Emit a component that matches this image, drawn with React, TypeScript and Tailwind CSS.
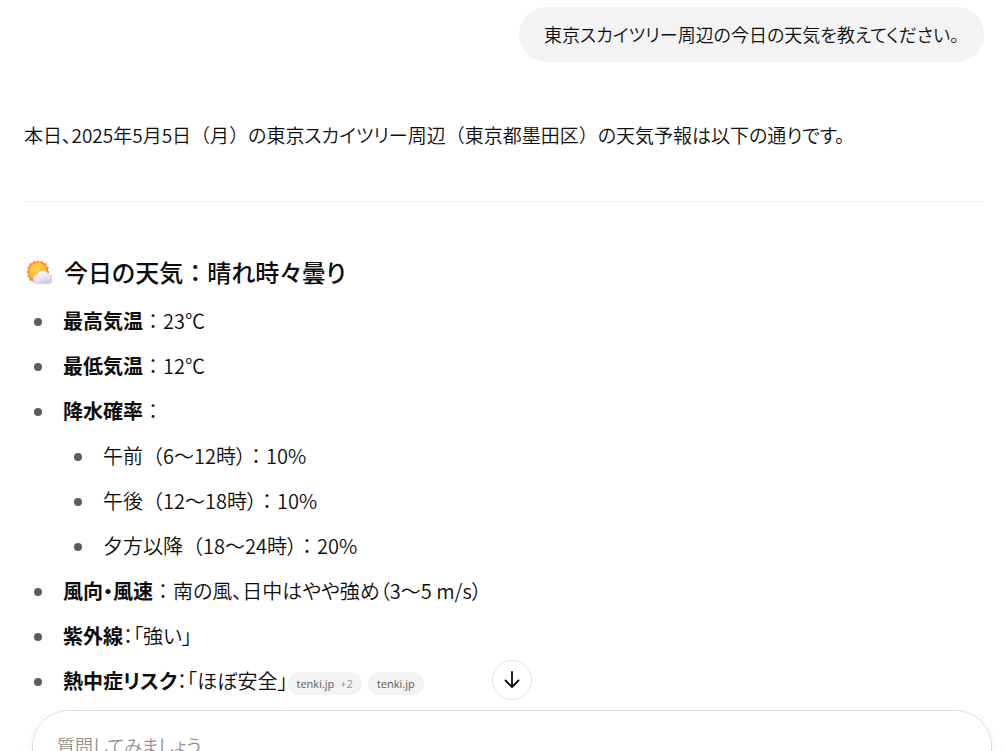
import type { ReactNode } from "react";

function WeatherIcon() {
  return (
    <svg className="h-6 w-7 shrink-0" viewBox="0 0 28 24" role="img" aria-label="晴れ時々曇り">
      <defs>
        <radialGradient id="sun" cx="0.4" cy="0.3" r="0.8">
          <stop offset="0" stopColor="#ffd04a" />
          <stop offset="0.6" stopColor="#fbb92f" />
          <stop offset="1" stopColor="#f49a25" />
        </radialGradient>
        <linearGradient id="cloud" x1="0" y1="0" x2="0.6" y2="1">
          <stop offset="0" stopColor="#fbf9fd" />
          <stop offset="0.6" stopColor="#e9e5f0" />
          <stop offset="1" stopColor="#cfc6e2" />
        </linearGradient>
      </defs>
      <path
        fill="#f3823a"
        stroke="#f3823a"
        strokeWidth="1"
        strokeLinejoin="round"
        d="M14 .8l1.8 1.7 2.4-.9 1.1 2.1 2.6.1.1 2.6 2.2 1.2-.9 2.4 1.5 2-1.5 2 .9 2.4-2.2 1.2-.1 2.6-2.6.1-1.1 2.1-2.4-.9-1.8 1.5-1.8-1.5-2.4.9-1.1-2.1-2.6-.1-.1-2.6-2.2-1.2.9-2.4-1.5-2 1.5-2-.9-2.4 2.2-1.2.1-2.6 2.6-.1 1.1-2.1 2.4.9z"
      />
      <circle cx="14" cy="12" r="9.4" fill="url(#sun)" />
      <path
        fill="url(#cloud)"
        d="M13.600 24a4.800 4.800 0 0 1-.5-9.500a6.200 6.200 0 0 1 10.800-1.300a5.400 5.400 0 0 1 0 10.800z"
      />
    </svg>
  );
}

/* Punctuation that keeps its full em width inside proportional text. */
function Full({ children }: { children: ReactNode }) {
  return <span className="[font-feature-settings:normal]">{children}</span>;
}

function Item({ label, children }: { label?: string; children?: ReactNode }) {
  return (
    <li className="pl-[7px]">
      {label && <strong className="font-bold">{label}</strong>}
      {children}
    </li>
  );
}

function Chance({ part, hours, value }: { part: string; hours: string; value: string }) {
  return (
    <Item>
      {part}
      <Full>（</Full>
      {hours}）<Full>：</Full>
      {value}
    </Item>
  );
}

function Source({ name, more }: { name: string; more?: string }) {
  return (
    <a
      href="#"
      className="flex h-[23px] items-center gap-1.5 rounded-full bg-[#f3f3f3] px-[9px] font-['Open_Sans',sans-serif] text-[11px] font-normal text-[#5d5d5d]"
    >
      {name}
      {more && <span className="text-[#8f8f8f]">{more}</span>}
    </a>
  );
}

export default function App() {
  return (
    <div className="relative h-screen overflow-hidden bg-white font-['Noto_Sans_CJK_JP',sans-serif] text-[20px] leading-[35px] font-[350] text-[#0d0d0d] [font-feature-settings:'palt']">
      <main className="pr-[21px] pl-6">
        <div className="flex justify-end pt-[7px]">
          <p className="rounded-[28px] bg-[#f3f3f3] px-[25px] py-2.5 text-[18px]">東京スカイツリー周辺の今日の天気を教えてください。</p>
        </div>

        <p className="mt-[55px] text-[19px]">
          本日、2025年5月5日<Full>（</Full>月<Full>）</Full>の東京スカイツリー周辺<Full>（</Full>東京都墨田区<Full>）</Full>
          の天気予報は以下の通りです。
        </p>

        <hr className="mt-[49px] border-[#f1f1f1]" />

        <h3 className="mt-[52px] flex items-center gap-3 text-[24px] font-medium">
          <WeatherIcon />
          <span>
            今日の天気<Full>：</Full>晴れ時々曇り
          </span>
        </h3>

        <ul className="mt-3.5 list-disc space-y-2.5 pl-8 marker:text-[#5d5d5d]">
          <Item label="最高気温">
            <Full>：</Full>23℃
          </Item>
          <Item label="最低気温">
            <Full>：</Full>12℃
          </Item>
          <Item label="降水確率">
            <Full>：</Full>
            <ul className="mt-2.5 list-disc space-y-2.5 pl-[33px] marker:text-[#5d5d5d]">
              <Chance part="午前" hours="6〜12時" value="10%" />
              <Chance part="午後" hours="12〜18時" value="10%" />
              <Chance part="夕方以降" hours="18〜24時" value="20%" />
            </ul>
          </Item>
          <Item label="風向・風速">
            <Full>：</Full>南の風、日中はやや強め（3〜5 m/s）
          </Item>
          <Item label="紫外線">：「強い」</Item>
          <Item label="熱中症リスク">
            ：「ほぼ安全」
            <span className="inline-flex gap-1.5 align-middle">
              <Source name="tenki.jp" more="+2" />
              <Source name="tenki.jp" />
            </span>
          </Item>
        </ul>
      </main>

      <button
        type="button"
        aria-label="一番下へ移動"
        className="absolute top-[660px] left-[calc(50%+9px)] flex size-10 -translate-x-1/2 items-center justify-center rounded-full border border-[#e3e3e3] bg-white"
      >
        <svg className="size-5" viewBox="0 0 20 20" fill="none" stroke="#0d0d0d" strokeWidth="1.8" strokeLinecap="round" strokeLinejoin="round" aria-hidden="true">
          <path d="M10 2v15M3.500 10.500l6.500 6.500 6.500-6.500" />
        </svg>
      </button>

      <form className="mt-3 mr-[13px] ml-8 rounded-[36px] border border-[#dedede] bg-white px-6 pt-4 pb-16 shadow-[0_8px_16px_rgba(0,0,0,0.05)]">
        <input
          type="text"
          aria-label="質問"
          placeholder="質問してみましょう"
          className="h-[35px] w-full text-[18px] outline-none placeholder:text-[#8f8f8f]"
        />
      </form>
    </div>
  );
}
